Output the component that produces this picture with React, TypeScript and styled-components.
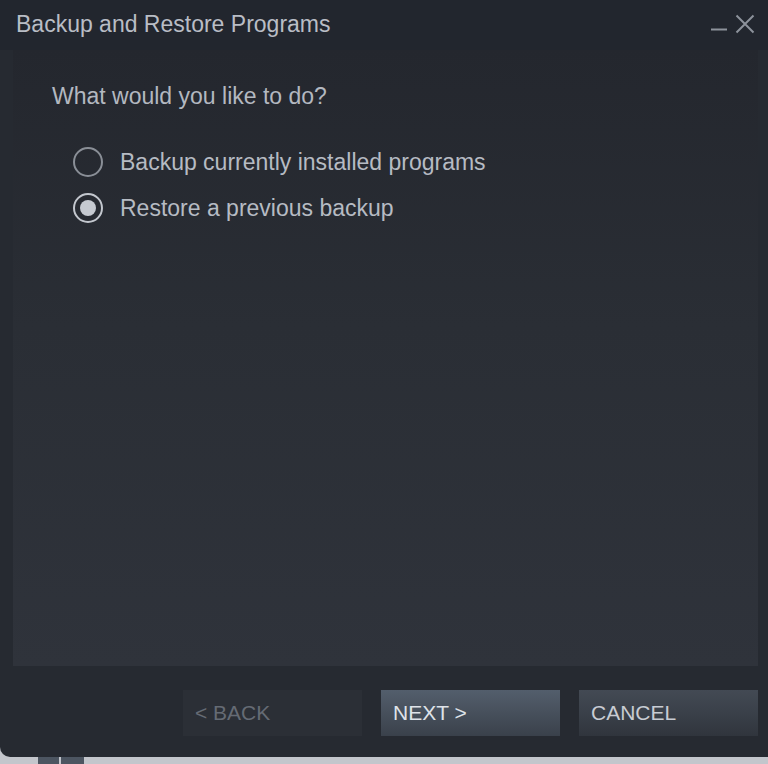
import React from 'react'
import styled, { createGlobalStyle } from 'styled-components'

const GlobalStyle = createGlobalStyle`
  html, body {
    margin: 0;
    padding: 0;
    background: #c3c6cc;
  }
  body {
    font-family: 'Liberation Sans', Arial, sans-serif;
  }
`

const Root = styled.div`
  width: 768px;
  height: 764px;
  display: flex;
  flex-direction: column;
  overflow: hidden;
`

const Window = styled.div`
  flex: 1;
  display: flex;
  flex-direction: column;
  background: #262a31;
  border-bottom-left-radius: 10px;
`

const TitleBar = styled.div`
  height: 50px;
  flex: none;
  display: flex;
  align-items: center;
  padding: 0 10px 2px 16px;
  box-sizing: border-box;
  background: #22262e;
`

const Title = styled.div`
  flex: 1;
  color: #b9bdc5;
  font-size: 23px;
`

const WinButton = styled.button`
  width: 26px;
  height: 26px;
  padding: 0;
  border: 0;
  background: transparent;
  display: flex;
  align-items: center;
  justify-content: center;
  color: #8d929b;
`

const Body = styled.div`
  flex: 1;
  display: flex;
  padding: 0 10px 0 13px;
`

const Panel = styled.div`
  flex: 1;
  padding: 33px 0 0 39px;
  background: linear-gradient(180deg, #24272e 0%, #2a2e35 45%, #2f333b 100%);
`

const Question = styled.div`
  color: #b3b8c0;
  font-size: 23px;
  margin-bottom: 37px;
`

const Options = styled.div`
  display: flex;
  flex-direction: column;
  gap: 16px;
  padding-left: 21px;
`

const Option = styled.label`
  display: flex;
  align-items: center;
  gap: 17px;
  color: #b6bbc3;
  font-size: 23px;
  cursor: pointer;
`

const Radio = styled.span<{ $checked?: boolean }>`
  width: 26px;
  height: 26px;
  border-radius: 50%;
  border: 2px solid ${(p) => (p.$checked ? '#c3c7ce' : '#8a8f97')};
  display: flex;
  align-items: center;
  justify-content: center;

  &::after {
    content: '';
    width: 16px;
    height: 16px;
    border-radius: 50%;
    background: #c6cad1;
    display: ${(p) => (p.$checked ? 'block' : 'none')};
  }
`

const Footer = styled.div`
  height: 91px;
  flex: none;
  display: flex;
  justify-content: flex-end;
  gap: 19px;
  padding: 24px 10px 0 0;
  box-sizing: border-box;
`

const Button = styled.button<{ $variant: 'disabled' | 'primary' | 'normal' }>`
  width: 179px;
  height: 46px;
  border: 0;
  padding: 0 12px;
  text-align: left;
  font-family: 'Liberation Sans', Arial, sans-serif;
  font-size: 21px;
  background: ${(p) =>
    p.$variant === 'primary'
      ? 'linear-gradient(180deg, #535e6c 0%, #48515d 45%, #3a414b 100%)'
      : p.$variant === 'normal'
        ? 'linear-gradient(180deg, #434a54 0%, #3a4049 50%, #30353d 100%)'
        : '#2b2f36'};
  color: ${(p) =>
    p.$variant === 'disabled' ? '#656b74' : p.$variant === 'primary' ? '#dfe3e9' : '#c8ccd3'};
`

const Taskbar = styled.div`
  height: 7px;
  flex: none;
  display: flex;
  background: #c3c6cc;
`

const TaskGap = styled.div<{ $w: number }>`
  width: ${(p) => p.$w}px;
  background: #4c5561;
  margin-left: ${(p) => (p.$w === 21 ? 38 : 2)}px;
`

export default function App() {
  return (
    <Root>
      <GlobalStyle />
      <Window>
        <TitleBar>
          <Title>Backup and Restore Programs</Title>
          <WinButton aria-label="Minimize">
            <svg width="18" height="18" viewBox="0 0 18 18">
              <path d="M1 14.5h16" stroke="currentColor" strokeWidth="2" />
            </svg>
          </WinButton>
          <WinButton aria-label="Close">
            <svg width="20" height="20" viewBox="0 0 20 20">
              <path d="M1.5 1.5l17 17M18.5 1.5l-17 17" stroke="currentColor" strokeWidth="2" />
            </svg>
          </WinButton>
        </TitleBar>
        <Body>
          <Panel>
            <Question>What would you like to do?</Question>
            <Options>
              <Option>
                <Radio />
                Backup currently installed programs
              </Option>
              <Option>
                <Radio $checked />
                Restore a previous backup
              </Option>
            </Options>
          </Panel>
        </Body>
        <Footer>
          <Button $variant="disabled">&lt; BACK</Button>
          <Button $variant="primary">NEXT &gt;</Button>
          <Button $variant="normal">CANCEL</Button>
        </Footer>
      </Window>
      <Taskbar>
        <TaskGap $w={21} />
        <TaskGap $w={23} />
      </Taskbar>
    </Root>
  )
}
